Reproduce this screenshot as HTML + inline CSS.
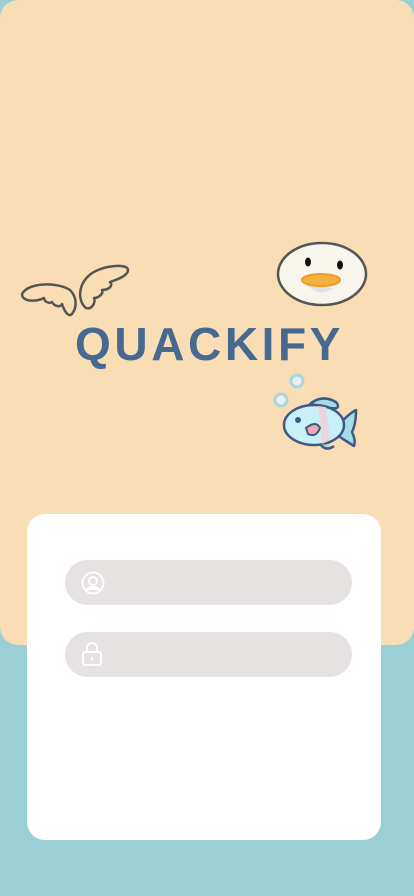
<!DOCTYPE html>
<html><head><style>
html,body{margin:0;padding:0;width:414px;height:896px;overflow:hidden;background:#9bcfd6;font-family:"Liberation Sans",sans-serif}
.top{position:absolute;left:0;top:0;width:414px;height:645px;background:#f8ddb5;border-radius:18px}
.title{position:absolute;left:75px;top:316px;font-size:46px;font-weight:bold;color:#476990;letter-spacing:3.6px;line-height:56px}
.card{position:absolute;left:27px;top:514px;width:354px;height:326px;background:#fff;border-radius:18px}
.inp{position:absolute;left:38px;width:287px;height:45px;background:#e6e2e2;border-radius:23px}
</style></head><body>
<div class="top"></div>
<svg style="position:absolute;left:0;top:0" width="414" height="520">
 <g fill="none" stroke="#555" stroke-width="2.5" stroke-linecap="round" stroke-linejoin="round">
  <path d="M22 294 C28 282 58 282 70 290 C76 296 78 306 72 314 C68 318 64 310 62 304 C60 308 54 306 52 302 C50 304 44 302 44 298 C36 302 22 302 22 294 Z"/>
  <path d="M86 308 C76 300 78 278 98 270 C110 265 128 264 128 270 C128 276 116 280 110 282 C114 286 108 290 102 290 C104 294 98 298 94 298 C96 302 92 310 86 308 Z"/>
 </g>
 <ellipse cx="322" cy="274" rx="44" ry="31" fill="#f8f6ec" stroke="#555" stroke-width="2.5"/>
 <ellipse cx="308" cy="262" rx="3" ry="4.5" fill="#111"/>
 <ellipse cx="340" cy="265" rx="3" ry="4.5" fill="#111"/>
 <path d="M306 285 Q320 298 334 288 Z" fill="#e3e1e6"/>
 <ellipse cx="321" cy="280" rx="19" ry="6" fill="#f2b040" stroke="#ef9a2a" stroke-width="2"/>
 <circle cx="297" cy="381" r="6" fill="#eee" stroke="#a8d8e0" stroke-width="3"/>
 <circle cx="281" cy="400" r="6" fill="#eee" stroke="#a8d8e0" stroke-width="3"/>
 <g stroke="#3e5a80" stroke-width="2.5" stroke-linejoin="round">
  <path d="M310 404 Q322 394 336 402 Q342 410 330 408 Z" fill="#a6dbe8"/>
  <path d="M336 428 Q348 414 356 410 Q356 424 352 432 Q356 440 354 446 Q344 440 336 434 Z" fill="#a6dbe8"/>
  <ellipse cx="314" cy="425" rx="30" ry="20" fill="#c8f0f8"/>
  <path d="M320 444 Q326 452 334 446" fill="#a6dbe8"/>
 </g>
 <path d="M318 406 L326 407 L330 440 L322 444 Z" fill="#f4cfd4" opacity=".8"/>
 <circle cx="298" cy="420" r="3" fill="#3e5a80"/>
 <path d="M306 428 Q316 420 320 428 Q316 438 308 434 Z" fill="#f2a7b4" stroke="#3e5a80" stroke-width="2"/>
</svg>
<div class="title">QUACKIFY</div>
<div class="card">
 <div class="inp" style="top:46px">
  <svg style="position:absolute;left:16px;top:11px" width="24" height="24" fill="none" stroke="#fff" stroke-width="1.8"><circle cx="12" cy="12" r="10.5"/><circle cx="12" cy="10" r="4"/><path d="M5 19 Q12 12 19 19" fill="#fff"/></svg>
 </div>
 <div class="inp" style="top:118px">
  <svg style="position:absolute;left:16px;top:9px" width="22" height="26" fill="none" stroke="#fff" stroke-width="1.8"><path d="M6 11 V7 a5 5 0 0 1 10 0 V11"/><rect x="2" y="11" width="18" height="13" rx="2"/><path d="M11 16 v3"/></svg>
 </div>
</div>
</body></html>
